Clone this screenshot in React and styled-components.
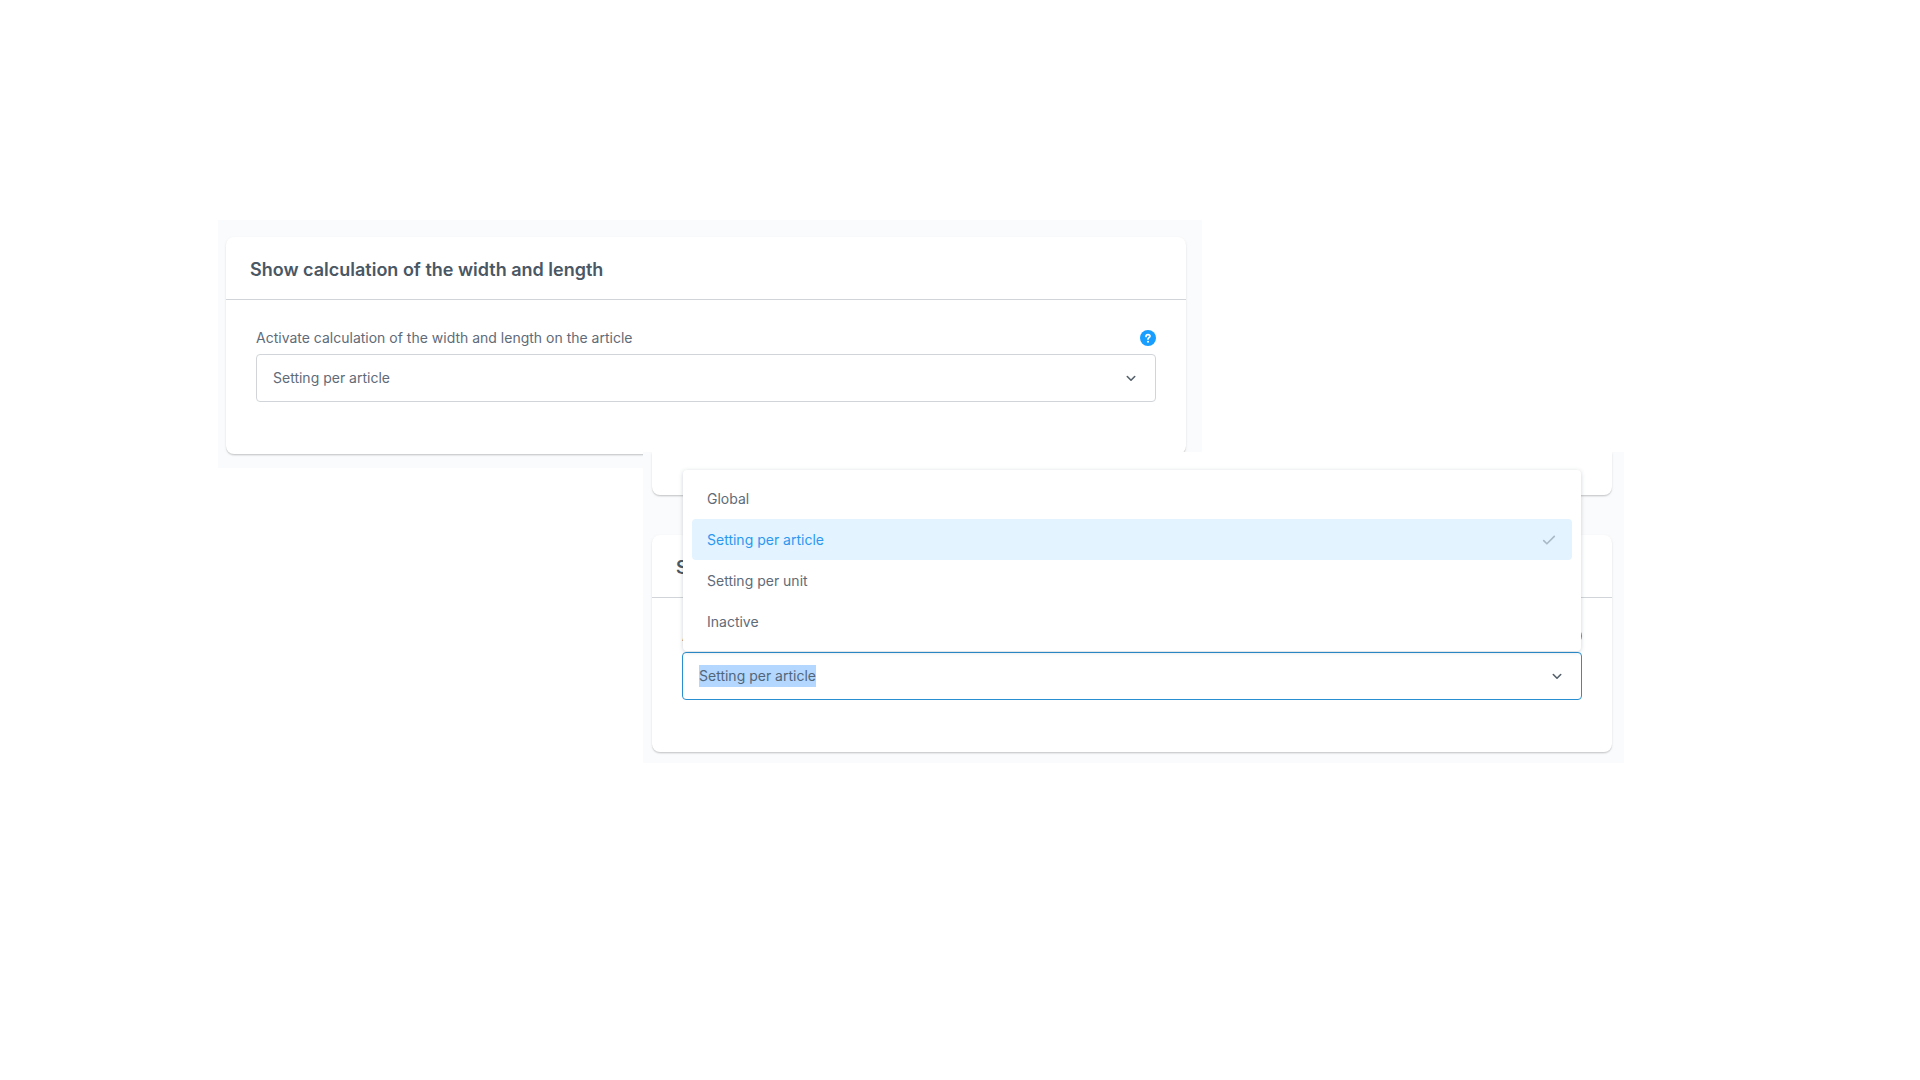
import React, { useEffect, useRef } from 'react';
import styled, { createGlobalStyle } from 'styled-components';

const GlobalStyle = createGlobalStyle`
  * {
    box-sizing: border-box;
  }

  body {
    margin: 0;
    background: #fff;
    color: #5f6b78;
    font-family: Inter, "Liberation Sans", sans-serif;
    font-size: 14px;
    line-height: 22px;
  }
`;

/* two panels stepped to the right, the second one laps over the first */
const Page = styled.main`
  display: grid;
  grid-template-columns: 218fr 425fr 559fr 422fr 296fr;
  padding: 220px 0;
`;

const Panel = styled.section`
  background: #fafbfc;
  overflow: hidden;
`;

const ClosedPanel = styled(Panel)`
  grid-column: 2 / 4;
  padding: 17px 16px 14px 8px;
`;

const OpenPanel = styled(Panel)`
  grid-column: 3 / 5;
  display: flex;
  flex-direction: column;
  gap: 40px;
  margin-top: -16px;
  padding: 0 12px 11px 9px;
  z-index: 1;
`;

const Card = styled.div`
  background: #fff;
  border-radius: 8px;
  box-shadow: 0 1px 1px rgba(0, 0, 0, 0.1), 0 2px 1px rgba(0, 0, 0, 0.04),
    0 1px 3px rgba(0, 0, 0, 0.08);
`;

const CardEnd = styled(Card)`
  height: 43px;
  border-radius: 0 0 8px 8px;
`;

const CardTitle = styled.h2`
  margin: 0;
  padding: 22px 24px 18px;
  border-bottom: 1px solid #d1d5d9;
  color: #4a5764;
  font-size: 18px;
  font-weight: 600;
  line-height: 22px;
`;

const CardBody = styled.div`
  padding: 27px 30px 52px;
`;

const LabelRow = styled.div`
  display: flex;
  align-items: center;
  justify-content: space-between;
  margin-bottom: 5px;
`;

const Label = styled.label`
  line-height: 22px;
`;

const HelpButton = styled.button`
  display: flex;
  padding: 0;
  border: none;
  border-radius: 50%;
  background: none;
  cursor: pointer;
`;

const Field = styled.div`
  position: relative;
  display: flex;
  align-items: center;
  height: 48px;
  border: 1px solid ${(props) => (props.$open ? '#2a8fd0' : '#d1d5d9')};
  border-radius: 4px;
  background: #fff;
`;

const Select = styled.select`
  appearance: none;
  width: 100%;
  height: 100%;
  padding: 0 48px 0 16px;
  border: none;
  outline: none;
  background: none;
  color: inherit;
  font: inherit;
`;

const SearchInput = styled.input`
  width: 100%;
  padding: 0 48px 0 16px;
  border: none;
  outline: none;
  background: none;
  color: inherit;
  font: inherit;
  line-height: 22px;

  &::selection {
    background: #b3d7ff;
    color: #52667a;
  }
`;

const Arrow = styled.svg`
  position: absolute;
  right: 19px;
  pointer-events: none;
`;

const Options = styled.ul`
  position: absolute;
  right: 0;
  bottom: calc(100% + 2px);
  left: 0;
  margin: 0;
  padding: 8px 9px 9px;
  border-radius: 4px;
  background: #fff;
  box-shadow: 0 1px 4px rgba(60, 75, 90, 0.25);
  list-style: none;
`;

const Option = styled.button`
  display: flex;
  align-items: center;
  justify-content: space-between;
  width: 100%;
  height: 41px;
  padding: 0 16px 0 15px;
  border: none;
  border-radius: 4px;
  background: ${(props) => (props.$active ? '#e3f3ff' : 'none')};
  color: ${(props) => (props.$active ? '#2b98f0' : 'inherit')};
  font: inherit;
  text-align: left;
  cursor: pointer;
`;

const options = ['Global', 'Setting per article', 'Setting per unit', 'Inactive'];
const current = 'Setting per article';

const ArrowIcon = () => (
  <Arrow width="10" height="8" viewBox="0 0 10 8" fill="none" aria-hidden="true">
    <path d="M1.3 2.5L5 6.2L8.7 2.5" stroke="#56606a" strokeWidth="1.6" strokeLinecap="round" strokeLinejoin="round" />
  </Arrow>
);

const CheckIcon = () => (
  <svg width="14" height="12" viewBox="0 0 14 12" fill="none" aria-hidden="true">
    <path d="M1.7 6.6L4.9 9.8L12.3 2.4" stroke="#a9bac6" strokeWidth="1.6" strokeLinecap="round" strokeLinejoin="round" />
  </svg>
);

const HelpIcon = () => (
  <svg width="16" height="16" viewBox="0 0 16 16" fill="none" aria-hidden="true">
    <circle cx="8" cy="8" r="8" fill="#189eff" />
    <path d="M6 6.4C6 5.2 6.9 4.6 8 4.6C9.2 4.6 10 5.3 10 6.3C10 7.6 8 7.7 8 9.1" stroke="#fff" strokeWidth="1.7" strokeLinecap="round" />
    <circle cx="8" cy="11.8" r="1" fill="#fff" />
  </svg>
);

const SettingCard = ({ id, open, children }) => (
  <Card>
    <CardTitle>Show calculation of the width and length</CardTitle>
    <CardBody>
      <LabelRow>
        <Label htmlFor={id}>Activate calculation of the width and length on the article</Label>
        <HelpButton type="button" aria-label="Help">
          <HelpIcon />
        </HelpButton>
      </LabelRow>
      <Field $open={open}>
        {children}
        <ArrowIcon />
      </Field>
    </CardBody>
  </Card>
);

const App = () => {
  const search = useRef(null);

  useEffect(() => {
    search.current.focus();
    search.current.select();
  }, []);

  return (
    <>
      <GlobalStyle />
      <Page>
        <ClosedPanel>
          <SettingCard id="calculation">
            <Select id="calculation" defaultValue={current}>
              {options.map((option) => (
                <option key={option}>{option}</option>
              ))}
            </Select>
          </SettingCard>
        </ClosedPanel>
        <OpenPanel>
          <CardEnd />
          <SettingCard id="calculation-search" open>
            <SearchInput
              ref={search}
              id="calculation-search"
              type="text"
              role="combobox"
              aria-expanded="true"
              aria-controls="calculation-options"
              autoComplete="off"
              defaultValue={current}
            />
            <Options id="calculation-options" role="listbox">
              {options.map((option) => (
                <li key={option} role="presentation">
                  <Option type="button" role="option" aria-selected={option === current} $active={option === current}>
                    {option}
                    {option === current && <CheckIcon />}
                  </Option>
                </li>
              ))}
            </Options>
          </SettingCard>
        </OpenPanel>
      </Page>
    </>
  );
};

export default App;
